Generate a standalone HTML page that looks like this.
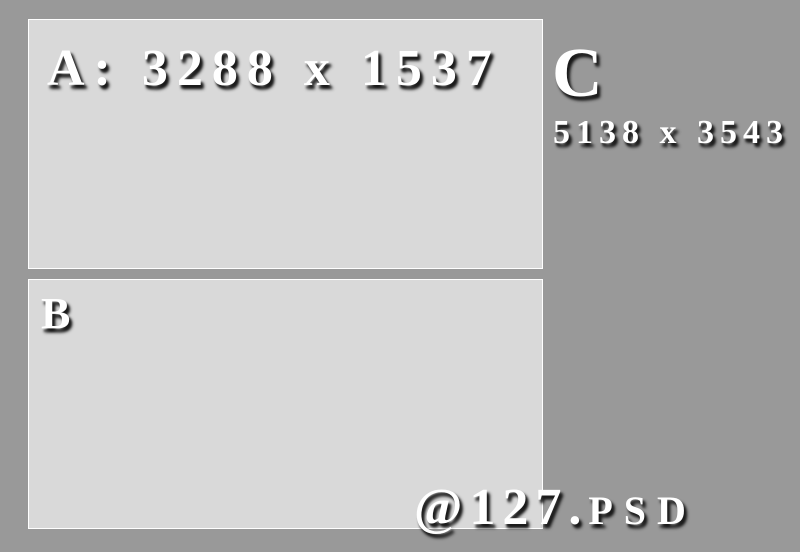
<!DOCTYPE html>
<html><head><style>
html,body{margin:0;padding:0}
body{width:800px;height:552px;background:#999;position:relative;overflow:hidden;font-family:"Liberation Serif",serif;}
.box{position:absolute;left:28px;width:512px;background:#d9d9d9;border:1px solid #fff;box-sizing:border-box}
.t{position:absolute;color:#fff;font-weight:bold;line-height:1;white-space:nowrap;text-shadow:3px 4px 3px #1a1a1a,2px 3px 2px #333}
</style></head><body>
<div class="box" style="top:19px;height:250px;width:515px"></div>
<div class="box" style="top:279px;height:250px;width:515px"></div>
<div class="t" style="left:47px;top:43px;font-size:52px;letter-spacing:9px">A: 3288 x 1537</div>
<div class="t" style="left:552px;top:39px;font-size:70px">C</div>
<div class="t" style="left:553px;top:116px;font-size:34px;letter-spacing:6px">5138 x 3543</div>
<div class="t" style="left:41px;top:292px;font-size:44px">B</div>
<div class="t" style="left:414px;top:482px;font-size:52px;letter-spacing:7px">@127.<span style="font-size:40px;letter-spacing:11px">PSD</span></div>
</body></html>
